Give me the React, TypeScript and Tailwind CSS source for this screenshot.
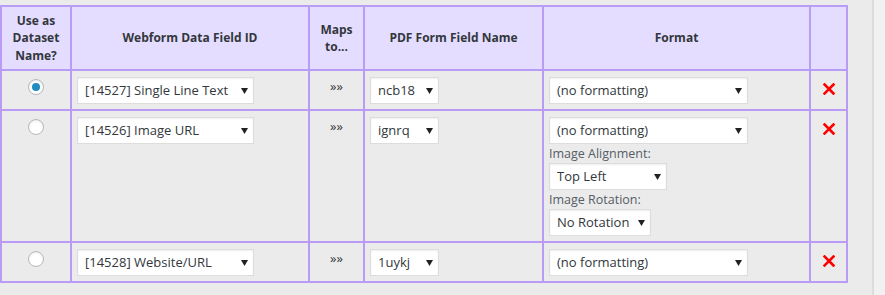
import { ChangeEvent, useState } from "react";

/* ─── Types ─── */
interface MappingRow {
  id: string;
  webformField: string;
  pdfField: string;
  isImage?: boolean;
}

const webformOptions = [
  "[14527] Single Line Text",
  "[14526] Image URL",
  "[14528] Website/URL",
];

const rows: MappingRow[] = [
  { id: "r1", webformField: "[14527] Single Line Text", pdfField: "ncb18" },
  { id: "r2", webformField: "[14526] Image URL", pdfField: "ignrq", isImage: true },
  { id: "r3", webformField: "[14528] Website/URL", pdfField: "1uykj" },
];

/* ─── WP-style select ─── */
function Select({
  value,
  options,
  className,
}: {
  value: string;
  options: string[];
  className: string;
}) {
  const [v, setV] = useState(value);
  return (
    <div className={`relative h-[27px] ${className}`}>
      <select
        value={v}
        onChange={(e: ChangeEvent<HTMLSelectElement>) => setV(e.target.value)}
        className="appearance-none w-full h-full bg-white border border-[#dddddd] shadow-[inset_0_1px_2px_rgba(0,0,0,0.07)] pl-[7px] pr-[16px] text-[13px] text-[#32373c] leading-[25px] outline-none"
      >
        {options.map((o) => (
          <option key={o}>{o}</option>
        ))}
      </select>
      <svg
        className="pointer-events-none absolute right-[6px] top-[11px]"
        width="7"
        height="6"
        viewBox="0 0 7 6"
      >
        <path d="M0 0h7L3.5 6z" fill="#222" />
      </svg>
    </div>
  );
}

function Radio({ checked }: { checked?: boolean }) {
  return (
    <span className="flex items-center justify-center w-4 h-4 rounded-full bg-white border border-[#b4b9be] shadow-[inset_0_1px_2px_rgba(0,0,0,0.1)]">
      {checked && <span className="w-2 h-2 rounded-full bg-[#1e8cbe]" />}
    </span>
  );
}

function RemoveIcon() {
  return (
    <svg width="12" height="12" viewBox="0 0 12 12">
      <path d="M1.5 1.5l9 9M10.5 1.5l-9 9" stroke="#ff0000" strokeWidth="2.6" strokeLinecap="square" />
    </svg>
  );
}

const head = "flex items-center justify-center text-center bg-[#e5ddff] text-[12px] font-bold leading-[17.5px] text-[#32373c]";
const cell = "bg-[#ebebeb]";

export default function App() {
  return (
    <div className="flex w-[885px] h-[295px] font-['Open_Sans',sans-serif]">
      <div className="w-[872px] bg-[#ebebeb] pt-[5px]">
        <div className="grid grid-cols-[68px_236px_53px_177px_265px_35px] grid-rows-[62px_38px_130px_38px] gap-[2px] p-[2px] bg-[#b99cf6] w-fit">
          {/* Header */}
          <div className={head}>
            Use as<br />Dataset<br />Name?
          </div>
          <div className={head}>Webform Data Field ID</div>
          <div className={head}>
            Maps<br />to...
          </div>
          <div className={head}>PDF Form Field Name</div>
          <div className={head}>Format</div>
          <div className={head} />

          {/* Rows */}
          {rows.map((row, i) => (
            <div key={row.id} className="contents">
              <div className={`${cell} flex justify-center pt-[8px]`}>
                <Radio checked={i === 0} />
              </div>
              <div className={`${cell} pt-[6px] pl-[5px]`}>
                <Select value={row.webformField} options={webformOptions} className="w-[177px]" />
              </div>
              <div className={`${cell} text-center pt-[5px] text-[13px] leading-[20px] text-[#32373c]`}>
                »»
              </div>
              <div className={`${cell} pt-[6px] pl-[5px]`}>
                <Select value={row.pdfField} options={[row.pdfField]} className="w-[69px]" />
              </div>
              <div className={`${cell} pt-[6px] pl-[5px] flex flex-col`}>
                <Select value="(no formatting)" options={["(no formatting)"]} className="w-[199px]" />
                {row.isImage && (
                  <>
                    <label className="text-[12.5px] leading-[19px] text-[#555d66]">Image Alignment:</label>
                    <Select value="Top Left" options={["Top Left", "Top Center", "Top Right"]} className="w-[118px]" />
                    <label className="text-[12.5px] leading-[19px] text-[#555d66]">Image Rotation:</label>
                    <Select value="No Rotation" options={["No Rotation", "90°", "180°", "270°"]} className="w-[102px]" />
                  </>
                )}
              </div>
              <div className={`${cell} flex justify-center pt-[12px]`}>
                <button type="button" aria-label="Remove mapping" className="h-3">
                  <RemoveIcon />
                </button>
              </div>
            </div>
          ))}
        </div>
      </div>
      <div className="w-[2px] bg-[#dcdcdc]" />
      <div className="flex-1 bg-[#f1f1f1]" />
    </div>
  );
}
